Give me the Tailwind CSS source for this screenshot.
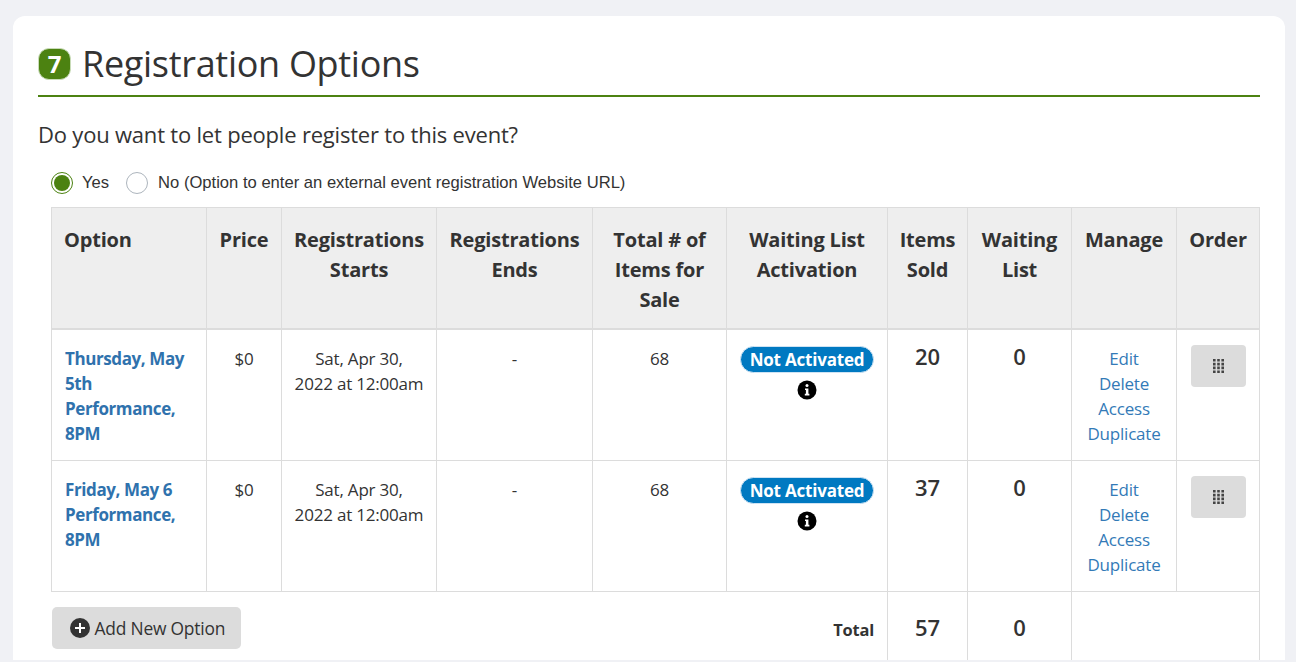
<!DOCTYPE html>
<html lang="en">
  <head>
    <meta charset="UTF-8" />
    <title>Registration Options</title>
    <script src="https://cdn.jsdelivr.net/npm/@tailwindcss/browser@4"></script>
  </head>
  <body class="h-[662px] overflow-hidden bg-[#f0f1f5] font-['Open_Sans',sans-serif] text-[#333]">
    <div class="ml-[13px] mt-4 h-[644px] w-[1272px] overflow-hidden rounded-t-xl bg-white pt-[30px] pr-[25px] pl-[25px]">
      <!-- section heading -->
      <div class="flex h-[51px] items-start gap-[11px] border-b-2 border-[#4c8211]">
        <span class="mt-[2px] flex h-[32px] w-[33px] items-center justify-center rounded-[11px] border border-[#c9dcb8] bg-[#4c8211] text-[24px] font-bold text-white">7</span>
        <h1 class="text-[36px] leading-[36px] tracking-[-0.3px] text-[#333]">Registration Options</h1>
      </div>

      <p class="mt-[23px] text-[22px] leading-[28px] tracking-[-0.2px]">Do you want to let people register to this event?</p>

      <div class="mt-[23px] ml-[13px] flex h-[24px] items-center font-['Liberation_Sans',sans-serif] text-[16.6px] text-[#333]">
        <span class="flex h-[22px] w-[22px] items-center justify-center rounded-full border border-[#4c8211]"><span class="h-4 w-4 rounded-full bg-[#4c8211]"></span></span>
        <span class="ml-[9px]">Yes</span>
        <span class="ml-[17px] h-[22px] w-[22px] rounded-full border border-[#adb5bd]"></span>
        <span class="ml-[10px]">No (Option to enter an external event registration Website URL)</span>
      </div>

      <table class="mt-[12px] ml-[13px] w-[1208px] table-fixed border-collapse text-center text-[17px] leading-[25px] tracking-[-0.2px]">
        <colgroup>
          <col class="w-[155px]" /><col class="w-[75px]" /><col class="w-[155px]" /><col class="w-[156px]" /><col class="w-[134px]" /><col class="w-[161px]" /><col class="w-[80px]" /><col class="w-[104px]" /><col class="w-[105px]" /><col class="w-[83px]" />
        </colgroup>
        <thead>
          <tr class="h-[121px] border-b-2 border-[#dcdcdc] bg-[#eeeeee] align-top text-[20px] leading-[30px] tracking-[-0.2px]">
            <th class="border border-[#dcdcdc] px-3 pt-[17px] text-left font-bold">Option</th>
            <th class="border border-[#dcdcdc] pt-[17px] font-bold">Price</th>
            <th class="border border-[#dcdcdc] pt-[17px] font-bold">Registrations Starts</th>
            <th class="border border-[#dcdcdc] pt-[17px] font-bold">Registrations Ends</th>
            <th class="border border-[#dcdcdc] px-3 pt-[17px] font-bold">Total # of Items for Sale</th>
            <th class="border border-[#dcdcdc] px-3 pt-[17px] font-bold">Waiting List Activation</th>
            <th class="border border-[#dcdcdc] px-2 pt-[17px] font-bold">Items Sold</th>
            <th class="border border-[#dcdcdc] px-3 pt-[17px] font-bold">Waiting List</th>
            <th class="border border-[#dcdcdc] pt-[17px] font-bold">Manage</th>
            <th class="border border-[#dcdcdc] pt-[17px] font-bold">Order</th>
          </tr>
        </thead>
        <tbody>
          <tr class="h-[132px] align-top">
            <td class="border border-[#dcdcdc] px-[13px] pt-[16px] text-left font-bold tracking-[-0.4px] text-[#2f72ad]">Thursday, May 5th Performance, 8PM</td>
            <td class="border border-[#dcdcdc] pt-[16px]">$0</td>
            <td class="border border-[#dcdcdc] px-2 pt-[16px]">Sat, Apr 30,<br />2022 at 12:00am</td>
            <td class="border border-[#dcdcdc] pt-[16px]">-</td>
            <td class="border border-[#dcdcdc] pt-[16px]">68</td>
            <td class="border border-[#dcdcdc] pt-[16px]">
              <span class="inline-block h-[27px] w-[134px] rounded-full border border-[#cfe3f3] bg-[#0079c1] text-[17px] leading-[25px] font-bold text-white">Not Activated</span>
              <svg class="mx-auto mt-[7px] block h-5 w-5" viewBox="0 0 20 20"><circle cx="10" cy="10" r="9.5" fill="#000" /><circle cx="10" cy="5.6" r="1.5" fill="#fff" /><path d="M8 8.4h3.4v5.4h1v1.6H7.8v-1.6h1.1V10H8z" fill="#fff" /></svg>
            </td>
            <td class="border border-[#dcdcdc] pt-[12px] text-[22px] leading-[28px] font-semibold">20</td>
            <td class="border border-[#dcdcdc] pt-[12px] text-[22px] leading-[28px] font-semibold">0</td>
            <td class="border border-[#dcdcdc] pt-[16px] text-[#337ab7]">Edit<br />Delete<br />Access<br />Duplicate</td>
            <td class="border border-[#dcdcdc] pt-[15px]">
              <span class="mx-auto flex h-[42px] w-[55px] items-center justify-center rounded-[4px] bg-[#dcdcdc]">
                <svg class="h-[14px] w-[11px]" viewBox="0 0 11 14" fill="#444"><path d="M0 0h2.6v2.6H0zM4.2 0h2.6v2.6H4.2zM8.4 0H11v2.6H8.4zM0 3.8h2.6v2.6H0zM4.2 3.8h2.6v2.6H4.2zM8.4 3.8H11v2.6H8.4zM0 7.6h2.6v2.6H0zM4.2 7.6h2.6v2.6H4.2zM8.4 7.6H11v2.6H8.4zM0 11.4h2.6V14H0zM4.2 11.4h2.6V14H4.2zM8.4 11.4H11V14H8.4z" /></svg>
              </span>
            </td>
          </tr>
          <tr class="h-[131px] align-top">
            <td class="border border-[#dcdcdc] px-[13px] pt-[16px] text-left font-bold tracking-[-0.4px] text-[#2f72ad]">Friday, May 6 Performance, 8PM</td>
            <td class="border border-[#dcdcdc] pt-[16px]">$0</td>
            <td class="border border-[#dcdcdc] px-2 pt-[16px]">Sat, Apr 30,<br />2022 at 12:00am</td>
            <td class="border border-[#dcdcdc] pt-[16px]">-</td>
            <td class="border border-[#dcdcdc] pt-[16px]">68</td>
            <td class="border border-[#dcdcdc] pt-[16px]">
              <span class="inline-block h-[27px] w-[134px] rounded-full border border-[#cfe3f3] bg-[#0079c1] text-[17px] leading-[25px] font-bold text-white">Not Activated</span>
              <svg class="mx-auto mt-[7px] block h-5 w-5" viewBox="0 0 20 20"><circle cx="10" cy="10" r="9.5" fill="#000" /><circle cx="10" cy="5.6" r="1.5" fill="#fff" /><path d="M8 8.4h3.4v5.4h1v1.6H7.8v-1.6h1.1V10H8z" fill="#fff" /></svg>
            </td>
            <td class="border border-[#dcdcdc] pt-[12px] text-[22px] leading-[28px] font-semibold">37</td>
            <td class="border border-[#dcdcdc] pt-[12px] text-[22px] leading-[28px] font-semibold">0</td>
            <td class="border border-[#dcdcdc] pt-[16px] text-[#337ab7]">Edit<br />Delete<br />Access<br />Duplicate</td>
            <td class="border border-[#dcdcdc] pt-[15px]">
              <span class="mx-auto flex h-[42px] w-[55px] items-center justify-center rounded-[4px] bg-[#dcdcdc]">
                <svg class="h-[14px] w-[11px]" viewBox="0 0 11 14" fill="#444"><path d="M0 0h2.6v2.6H0zM4.2 0h2.6v2.6H4.2zM8.4 0H11v2.6H8.4zM0 3.8h2.6v2.6H0zM4.2 3.8h2.6v2.6H4.2zM8.4 3.8H11v2.6H8.4zM0 7.6h2.6v2.6H0zM4.2 7.6h2.6v2.6H4.2zM8.4 7.6H11v2.6H8.4zM0 11.4h2.6V14H0zM4.2 11.4h2.6V14H4.2zM8.4 11.4H11V14H8.4z" /></svg>
              </span>
            </td>
          </tr>
          <tr class="h-[80px] align-top">
            <td colspan="6" class="pt-[15px]">
              <div class="flex items-start justify-between pr-[13px]">
                <span class="flex h-[42px] w-[189px] items-center justify-start gap-[5px] rounded-[5px] bg-[#dcdcdc] pl-[18px] text-[17.4px]">
                  <svg class="h-5 w-5" viewBox="0 0 20 20"><circle cx="10" cy="10" r="10" fill="#333" /><path d="M9 5h2v4h4v2h-4v4H9v-4H5V9h4z" fill="#fff" /></svg>
                  Add New Option
                </span>
                <span class="mt-[10px] text-[16.4px] font-bold">Total</span>
              </div>
            </td>
            <td class="border border-[#dcdcdc] pt-[21px] text-[22px] leading-[28px] font-semibold">57</td>
            <td class="border border-[#dcdcdc] pt-[21px] text-[22px] leading-[28px] font-semibold">0</td>
            <td colspan="2" class="border border-[#dcdcdc]"></td>
          </tr>
        </tbody>
      </table>
    </div>
  </body>
</html>
